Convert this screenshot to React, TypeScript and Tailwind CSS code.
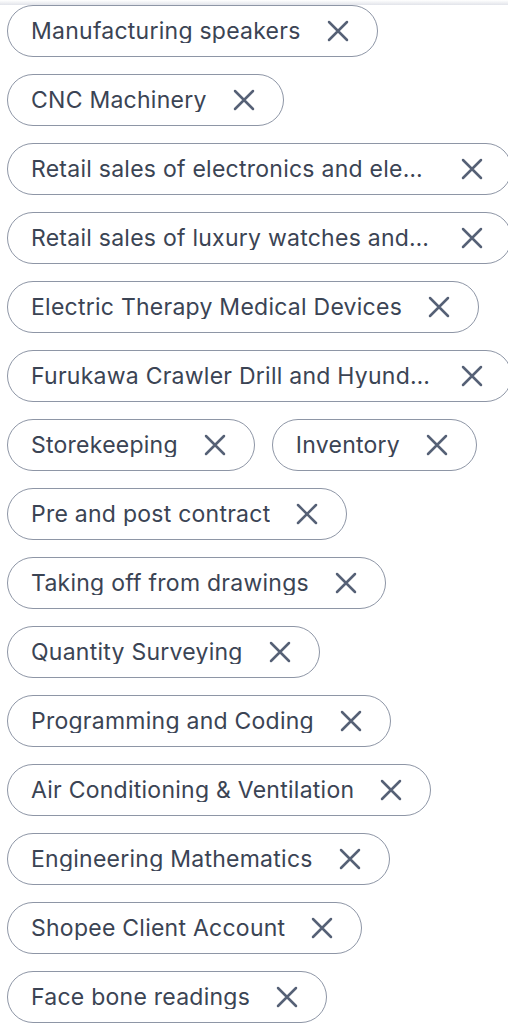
const TAGS: string[][] = [
  ['Manufacturing speakers'],
  ['CNC Machinery'],
  ['Retail sales of electronics and electrical appliances'],
  ['Retail sales of luxury watches and accessories'],
  ['Electric Therapy Medical Devices'],
  ['Furukawa Crawler Drill and Hyundai Excavator'],
  ['Storekeeping', 'Inventory'],
  ['Pre and post contract'],
  ['Taking off from drawings'],
  ['Quantity Surveying'],
  ['Programming and Coding'],
  ['Air Conditioning & Ventilation'],
  ['Engineering Mathematics'],
  ['Shopee Client Account'],
  ['Face bone readings'],
]

function CloseIcon() {
  return (
    <svg width="22" height="22" viewBox="0 0 22 22" className="shrink-0 text-[#566176]">
      <path d="M2 2 L20 20 M20 2 L2 20" stroke="currentColor" strokeWidth="2.5" strokeLinecap="round" />
    </svg>
  )
}

function Chip({ label }: { label: string }) {
  return (
    <div className="flex h-[52px] min-w-0 max-w-full items-center gap-[26px] rounded-full border border-[#8e96a6] bg-white pl-[23px] pr-[28px]">
      <span className="truncate text-[23px] leading-none tracking-[0.25px] text-[#3b4454]">{label}</span>
      <CloseIcon />
    </div>
  )
}

export default function App() {
  return (
    <div className="relative min-h-[1023px] w-[508px] overflow-hidden bg-white font-['Inter',sans-serif]">
      <div className="pointer-events-none absolute inset-x-0 top-0 h-[5px] bg-gradient-to-b from-white to-[#e2e4ea]" />
      <div className="ml-[7px] flex w-[505px] flex-col gap-[17px] pt-[5px]">
        {TAGS.map((row, i) => (
          <div key={i} className="flex gap-[17px]">
            {row.map((t) => (
              <Chip key={t} label={t} />
            ))}
          </div>
        ))}
      </div>
    </div>
  )
}
